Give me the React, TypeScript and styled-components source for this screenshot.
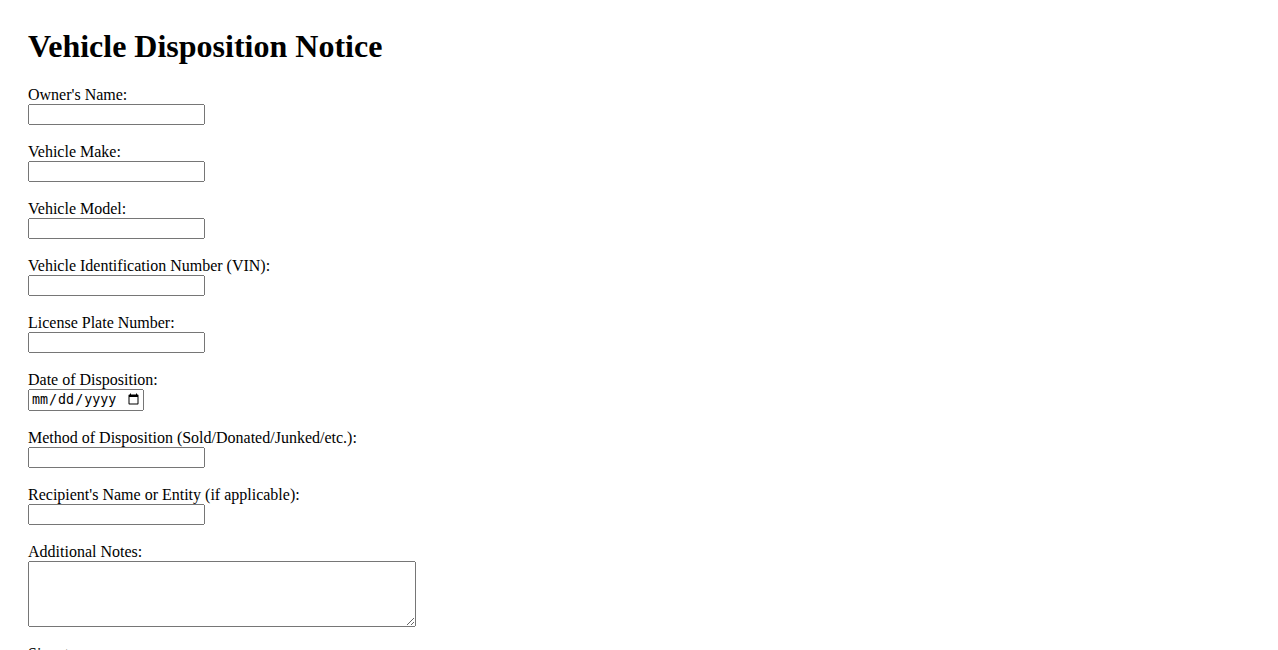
import styled, { createGlobalStyle } from "styled-components";

const GlobalStyle = createGlobalStyle`
body{
  margin:8px;
  font-family:"Liberation Serif", "Times New Roman", serif;
  font-size:16px;
  color:#000;
  background:#fff;
}
`;

const Page = styled.div`
padding:20px;
`;

const Title = styled.h1`
font-size:32px;
font-weight:bold;
margin:0 0 22px 0;
line-height:36px;
`;

const Form = styled.form`
display:flex;
flex-direction:column;
`;

const Field = styled.div`
display:flex;
flex-direction:column;
align-items:flex-start;
margin-bottom:18px;
`;

const Label = styled.label`
display:block;
line-height:18px;
`;

const TextInput = styled.input<{ $w?: number; $h?: number }>`
display:block;
box-sizing:border-box;
width:${(p) => p.$w ?? 177}px;
height:${(p) => p.$h ?? 21}px;
margin:0;
`;

const Notes = styled.textarea`
display:block;
box-sizing:border-box;
width:388px;
height:66px;
margin:0;
`;

const fields = [
  { id: "owner", label: "Owner's Name:" },
  { id: "make", label: "Vehicle Make:" },
  { id: "model", label: "Vehicle Model:" },
  { id: "vin", label: "Vehicle Identification Number (VIN):" },
  { id: "plate", label: "License Plate Number:" },
  { id: "date", label: "Date of Disposition:", type: "date", w: 116, h: 22 },
  { id: "method", label: "Method of Disposition (Sold/Donated/Junked/etc.):" },
  { id: "recipient", label: "Recipient's Name or Entity (if applicable):" },
];

function App() {
  return (
    <Page>
      <GlobalStyle />
      <Title>Vehicle Disposition Notice</Title>
      <Form onSubmit={(e) => e.preventDefault()}>
        {fields.map((f) => (
          <Field key={f.id}>
            <Label htmlFor={f.id}>{f.label}</Label>
            <TextInput id={f.id} type={f.type || "text"} $w={f.w} $h={f.h} />
          </Field>
        ))}
        <Field>
          <Label htmlFor="notes">Additional Notes:</Label>
          <Notes id="notes" />
        </Field>
        <Field>
          <Label htmlFor="signature">Signature:</Label>
          <TextInput id="signature" type="text" />
        </Field>
      </Form>
    </Page>
  );
}

export default App;
